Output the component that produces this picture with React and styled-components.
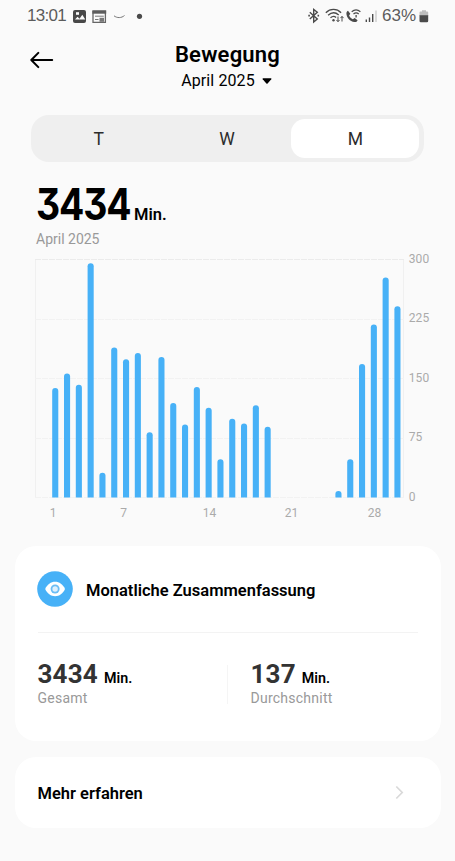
import React from 'react'
import styled, { createGlobalStyle } from 'styled-components'

const GlobalStyle = createGlobalStyle`
  * {
    box-sizing: border-box;
  }
  body {
    margin: 0;
    background: #fafafa;
    font-family: Roboto, 'Noto Sans', sans-serif;
    color: #000;
  }
`

const Screen = styled.div`
  width: 455px;
  height: 861px;
  overflow: hidden;
  display: flex;
  flex-direction: column;
  background: #fafafa;
`

const StatusBar = styled.div`
  flex: none;
  display: flex;
  justify-content: space-between;
  align-items: center;
  height: 31px;
  padding: 0 26px 0 27px;
  font-family: 'Liberation Sans', Arial, sans-serif;
  font-size: 17px;
  line-height: 31px;
  color: #5c5c5c;
`

const StatusGroup = styled.div`
  display: flex;
  align-items: center;
  svg {
    display: block;
    flex: none;
  }
`

const Clock = styled.span`
  width: 45px;
  letter-spacing: -0.7px;
`

const Battery = styled.span`
  width: 37px;
  letter-spacing: 0.1px;
`

const Header = styled.header`
  flex: none;
  display: grid;
  grid-template-columns: 1fr auto 1fr;
  height: 84px;
  padding: 10px 30px 0;
`

const BackButton = styled.button`
  justify-self: start;
  align-self: start;
  margin-top: 10px;
  padding: 0;
  border: 0;
  background: none;
  svg {
    display: block;
  }
`

const Heading = styled.div`
  display: flex;
  flex-direction: column;
  align-items: center;
`

const Title = styled.h1`
  margin: 0;
  font-size: 22px;
  font-weight: 600;
  line-height: 27px;
  letter-spacing: 0.2px;
`

const MonthPicker = styled.div`
  display: flex;
  align-items: center;
  gap: 7px;
  font-size: 16px;
  line-height: 25px;
  letter-spacing: 0.1px;
  padding-right: 2px;
`

const Segments = styled.div`
  flex: none;
  display: flex;
  margin: 0 31px 0 30.5px;
  height: 47px;
  padding: 4px 4.5px 4px 4px;
  border-radius: 18px;
  background: #efefef;
`

const Segment = styled.div`
  flex: 1;
  border-radius: 14px;
  background: ${p => (p.$active ? '#fff' : 'transparent')};
  font-size: 17.5px;
  line-height: 40px;
  text-align: center;
  color: #2c2c2c;
`

const Total = styled.div`
  flex: none;
  display: flex;
  align-items: baseline;
  height: 64px;
  padding: 13px 0 0 36px;
  line-height: 58px;
`

const TotalNumber = styled.span`
  width: 98px;
  font-family: Inter, Roboto, sans-serif;
  font-size: 43.5px;
  font-weight: 700;
  font-feature-settings: 'cv09' 1;
  letter-spacing: -1.3px;
  transform: scaleX(0.86);
  transform-origin: left;
`

const TotalUnit = styled.span`
  font-size: 16.5px;
  font-weight: 600;
`

const Period = styled.div`
  flex: none;
  height: 26px;
  padding-left: 36px;
  font-size: 14px;
  line-height: 26px;
  color: #999;
`

const Chart = styled.svg`
  flex: none;
  display: block;
  font-size: 12px;
`

const Card = styled.section`
  flex: none;
  margin: 0 14.5px 16px;
  padding: 0 22.5px 0 23px;
  border-radius: 21px;
  background: #fff;
`

const CardHeader = styled.div`
  display: flex;
  align-items: center;
  gap: 13px;
  height: 87px;
  border-bottom: 1px solid #f3f3f3;
  svg {
    display: block;
    margin-left: -0.5px;
  }
`

const CardTitle = styled.h2`
  margin: 0;
  padding-top: 3px;
  font-size: 16.5px;
  font-weight: 600;
  line-height: 24px;
`

const Stats = styled.div`
  display: grid;
  grid-template-columns: 189px 1px 1fr;
  align-items: start;
  height: 108px;
  padding-top: 25px;
`

const Stat = styled.div`
  padding-left: ${p => (p.$inset ? '23px' : '0')};
`

const StatDivider = styled.div`
  height: 39px;
  margin-top: 7px;
  background: #f5f5f5;
`

const StatValue = styled.div`
  display: flex;
  align-items: baseline;
  gap: 6px;
  height: 31px;
  line-height: 32px;
  font-size: 26px;
  font-weight: 700;
  letter-spacing: 0.2px;
  color: #333;
`

const StatUnit = styled.span`
  font-size: 14.3px;
  font-weight: 600;
  letter-spacing: 0;
  color: #000;
`

const StatLabel = styled.div`
  font-size: 14px;
  line-height: 18px;
  letter-spacing: 0.25px;
  color: #999;
`

const LinkRow = styled.div`
  display: flex;
  justify-content: space-between;
  align-items: center;
  height: 70.5px;
  padding-right: 14px;
`

const minutes = [
  138, 156, 142, 295, 31, 189, 174, 182, 82, 177,
  119, 92, 139, 113, 48, 99, 93, 116, 89, 0,
  0, 0, 0, 0, 8, 48, 168, 218, 277, 241,
]

const dayLabels = [
  { day: 1, x: 53 },
  { day: 7, x: 123.5 },
  { day: 14, x: 209.5 },
  { day: 21, x: 291.5 },
  { day: 28, x: 374.5 },
]

const ZERO = 245.4
const SCALE = 0.7935

const barPath = (value, i) => {
  const x = 52.2 + i * 11.8
  const top = ZERO - value * SCALE
  return `M${x} ${ZERO}V${top + 3}a3.05 3 0 0 1 6.1 0V${ZERO}z`
}

const MinutesChart = () => (
  <Chart width="455" height="294" viewBox="0 0 455 294">
    <path d={`M35.5 7.5V${ZERO}M403.5 7.5V${ZERO}`} stroke="#f0f0f0" />
    {[0, 75, 150, 225, 300].map(v => {
      const y = ZERO - v * SCALE
      return (
        <g key={v}>
          <path d={`M35 ${Math.round(y) + 0.5}H404`} stroke={v === 300 ? '#ebebeb' : '#f2f2f2'} strokeDasharray="6 1" />
          <text x="408.7" y={y + 3.6} fill="#aaa" letterSpacing="0.1">{v}</text>
        </g>
      )
    })}
    {minutes.map((v, i) => v > 0 && <path key={i} d={barPath(v, i)} fill="#47b1f7" />)}
    {dayLabels.map(({ day, x }) => (
      <text key={day} x={x} y="265.2" fill="#aaa" textAnchor="middle">{day}</text>
    ))}
  </Chart>
)

const NotificationIcons = () => (
  <svg width="72" height="16" viewBox="72 7 72 16" fill="none">
    <rect x="73" y="9" width="13" height="13" rx="2" fill="#484848" />
    <path d="M75 18.5l2.5-2.7 2 2 2.8-4 3 4.7z" fill="#fafafa" />
    <rect x="76" y="11.2" width="3" height="2.6" fill="#fafafa" />
    <path d="M93 10.5h12.4v10.8H93z" stroke="#666" strokeWidth="1.3" />
    <path d="M92.4 9.3h13.8v3.4H92.4z" fill="#5c5c5c" />
    <path d="M95 15.2h8.8M95 18.5h3.5" stroke="#777" />
    <path d="M99.5 16.8h4.5v4h-4.5z" fill="#777" />
    <path d="M114 14.8c3 2.4 7.5 2.4 10.5-.3" stroke="#777" strokeWidth="1" />
    <circle cx="139.5" cy="15.3" r="2.6" fill="#4a4a4a" />
  </svg>
)

const SignalIcons = () => (
  <svg width="75" height="18" viewBox="305.5 6.5 75 18" fill="none" stroke="#4a4a4a">
    <path d="M308.3 11.7l7.5 6.8-3.6 3V9l3.6 2.8-7.5 6.8" strokeWidth="1.4" />
    <path d="M306.8 15.2h1.6M316 15.2h1.6" strokeWidth="1.8" />
    <path d="M324.3 12.2c4.5-4.3 11-4.3 15.3 0M326.6 14.8c3.3-3 7.5-3 10.6-.4M329 17.3c1.9-1.7 4-1.7 5.6-.4" strokeWidth="1.3" />
    <circle cx="332" cy="19.8" r="1.2" fill="#4a4a4a" stroke="none" />
    <path d="M336.5 16v5M335 19.5l1.5 1.7 1.5-1.7M340.5 21v-5M339 17.6l1.5-1.7 1.5 1.7" strokeWidth="1" />
    <path d="M346.5 10.2l2.3 3-1.2 1.9c.8 1.7 2 2.9 3.7 3.7l1.9-1.2 2.9 2.1c-.5 1.5-1.8 2-3.2 1.8-4.5-.8-7.6-4-8-8.3 0-1.4.4-2.5 1.6-3z" fill="#4a4a4a" stroke="none" />
    <path d="M350.2 11.3c2.7-2.3 6-2.3 8.7 0M352 13.5c1.7-1.5 3.6-1.5 5.2 0" strokeWidth="1.2" />
    <path d="M354.6 14.4v2.5" strokeWidth="1.3" />
    <path d="M364.8 19v2.5M368 17v4.5M371.2 13.5v8" strokeWidth="1.4" />
    <path d="M374.5 10v11.5" stroke="#ccc" strokeWidth="1.4" />
  </svg>
)

const BatteryIcon = () => (
  <svg width="10" height="14" viewBox="0 0 10 14">
    <path d="M3 1.2h4v1.3h1.2q1 0 1 1V7H.5V3.5q0-1 1-1H3z" fill="#bdbdbd" />
    <path d="M.5 6.2h8.7v5.8q0 1.3-1.3 1.3H1.8Q.5 13.3.5 12z" fill="#4a4a4a" />
  </svg>
)

const ArrowLeft = () => (
  <svg width="24" height="18" viewBox="0 0 24 18" fill="none" stroke="#000" strokeWidth="2" strokeLinecap="round" strokeLinejoin="round">
    <path d="M22.2 9H1.5M8.3 1.9L1.3 9l7 7.1" />
  </svg>
)

const Caret = () => (
  <svg width="10" height="6" viewBox="0 0 10 6">
    <path d="M1 .2h8q.8.3.3 1L5.6 5.4q-.6.5-1.2 0L.7 1.2Q.2.5 1 .2z" />
  </svg>
)

const EyeBadge = () => (
  <svg width="36" height="36" viewBox="0 0 36 36">
    <circle cx="18" cy="18" r="17.8" fill="#47b1f7" />
    <path d="M8.2 18c2-4.6 5.7-7.2 9.9-7.2S26 13.4 28 18c-2 4.6-5.7 7.2-9.9 7.2S10.2 22.6 8.2 18z" fill="#fff" />
    <circle cx="18.1" cy="18" r="4.5" fill="#6bbdf5" />
    <circle cx="18.1" cy="18" r="2.7" fill="#dff0fd" />
  </svg>
)

const ChevronRight = () => (
  <svg width="9" height="16" viewBox="0 -2 9 16" fill="none" stroke="#d9d9d9" strokeWidth="1.7">
    <path d="M1.3 .5l5.9 6-5.9 6" />
  </svg>
)

const App = () => {
  return (
    <Screen>
      <GlobalStyle />
      <StatusBar>
        <StatusGroup>
          <Clock>13:01</Clock>
          <NotificationIcons />
        </StatusGroup>
        <StatusGroup>
          <SignalIcons />
          <Battery>63%</Battery>
          <BatteryIcon />
        </StatusGroup>
      </StatusBar>
      <Header>
        <BackButton aria-label="Zurück"><ArrowLeft /></BackButton>
        <Heading>
          <Title>Bewegung</Title>
          <MonthPicker>April 2025 <Caret /></MonthPicker>
        </Heading>
      </Header>
      <Segments>
        <Segment>T</Segment>
        <Segment>W</Segment>
        <Segment $active>M</Segment>
      </Segments>
      <Total>
        <TotalNumber>3434</TotalNumber>
        <TotalUnit>Min.</TotalUnit>
      </Total>
      <Period>April 2025</Period>
      <MinutesChart />
      <Card>
        <CardHeader>
          <EyeBadge />
          <CardTitle>Monatliche Zusammenfassung</CardTitle>
        </CardHeader>
        <Stats>
          <Stat>
            <StatValue>3434 <StatUnit>Min.</StatUnit></StatValue>
            <StatLabel>Gesamt</StatLabel>
          </Stat>
          <StatDivider />
          <Stat $inset>
            <StatValue>137 <StatUnit>Min.</StatUnit></StatValue>
            <StatLabel>Durchschnitt</StatLabel>
          </Stat>
        </Stats>
      </Card>
      <Card>
        <LinkRow>
          <CardTitle>Mehr erfahren</CardTitle>
          <ChevronRight />
        </LinkRow>
      </Card>
    </Screen>
  )
}

export default App
